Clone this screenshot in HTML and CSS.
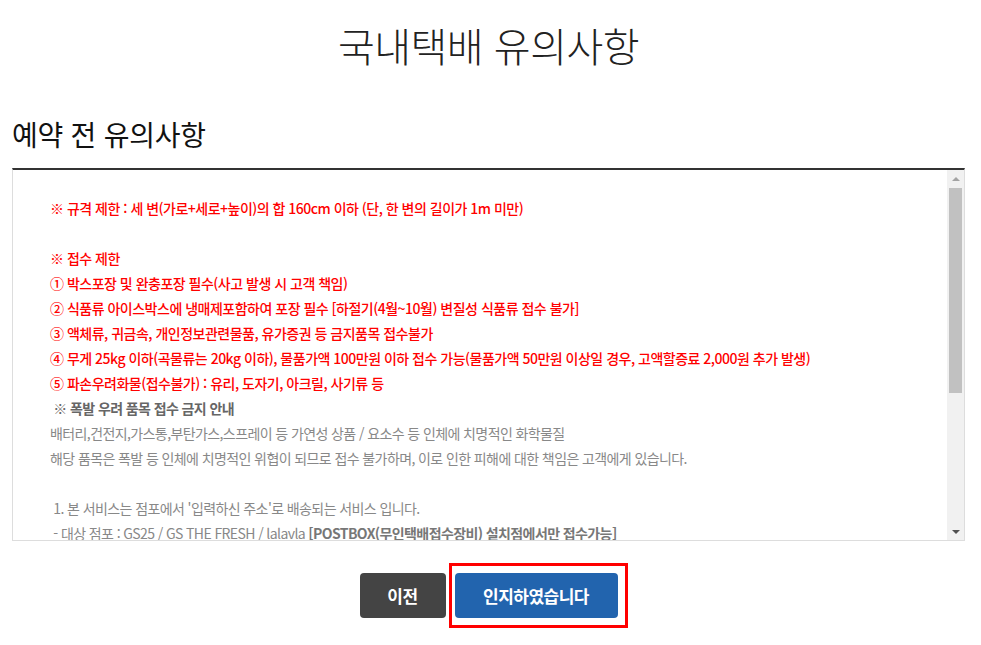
FILE: index.html
```html
<!DOCTYPE html>
<html lang="ko">
<head>
    <meta charset="UTF-8">
    <meta name="viewport" content="width=device-width, initial-scale=1.0">
    <title>국내택배 유의사항</title>
    <link rel="stylesheet" href="styles.css">
</head>
<body>
    <div class="wrap">
        <h1 class="page-title">국내택배 유의사항</h1>

        <h2 class="sub-title">예약 전 유의사항</h2>

        <div class="notice-box">
            <div class="notice-body">
                <p class="red">※ 규격 제한 : 세 변(가로+세로+높이)의 합 160cm 이하 (단, 한 변의 길이가 1m 미만)</p>
                <p class="blank"></p>
                <p class="red">※ 접수 제한</p>
                <p class="red">① 박스포장 및 완충포장 필수(사고 발생 시 고객 책임)</p>
                <p class="red">② 식품류 아이스박스에 냉매제포함하여 포장 필수 [하절기(4월~10월) 변질성 식품류 접수 불가]</p>
                <p class="red">③ 액체류, 귀금속, 개인정보관련물품, 유가증권 등 금지품목 접수불가</p>
                <p class="red">④ 무게 25kg 이하(곡물류는 20kg 이하), 물품가액 100만원 이하 접수 가능(물품가액 50만원 이상일 경우, 고액할증료 2,000원 추가 발생)</p>
                <p class="red">⑤ 파손우려화물(접수불가) : 유리, 도자기, 아크릴, 사기류 등</p>
                <p class="gray-bold">&nbsp;※ 폭발 우려 품목 접수 금지 안내</p>
                <p>배터리,건전지,가스통,부탄가스,스프레이 등 가연성 상품 / 요소수 등 인체에 치명적인 화학물질</p>
                <p>해당 품목은 폭발 등 인체에 치명적인 위협이 되므로 접수 불가하며, 이로 인한 피해에 대한 책임은 고객에게 있습니다.</p>
                <p class="blank"></p>
                <p>&nbsp;1. 본 서비스는 점포에서 '입력하신 주소'로 배송되는 서비스 입니다.</p>
                <p>&nbsp;- 대상 점포 : GS25 / GS THE FRESH / lalavla <b>[POSTBOX(무인택배접수장비) 설치점에서만 접수가능]</b></p>
            </div>
            <div class="scrollbar">
                <span class="sb-btn"><i class="arrow-up"></i></span>
                <span class="sb-track"><span class="sb-thumb"></span></span>
                <span class="sb-btn"><i class="arrow-down"></i></span>
            </div>
        </div>

        <div class="btn-area">
            <button type="button" class="btn btn-prev">이전</button>
            <button type="button" class="btn btn-ok">인지하였습니다</button>
        </div>
    </div>
</body>
</html>
```

FILE: styles.css
```css
* {
    margin: 0;
    padding: 0;
    box-sizing: border-box;
}

body {
    font-family: "Noto Sans CJK KR", "Noto Sans", sans-serif;
    background: #fff;
    color: #333;
    min-height: 100vh;
}

.wrap {
    padding: 0 16px 0 12px;
}

.page-title {
    text-align: center;
    font-size: 40px;
    font-weight: 300;
    color: #222;
    line-height: 50px;
    padding-top: 20px;
    letter-spacing: -0.5px;
}

.sub-title {
    font-size: 28px;
    font-weight: 400;
    color: #111;
    line-height: 36px;
    margin-top: 46px;
    letter-spacing: -0.25px;
}

/* 유의사항 박스 */
.notice-box {
    display: flex;
    margin-top: 16px;
    height: 373px;
    border-top: 2px solid #333;
    border-left: 1px solid #ddd;
    border-right: 1px solid #ddd;
    border-bottom: 1px solid #ddd;
}

.notice-body {
    flex: 1;
    overflow: hidden;
    padding: 26px 20px 0 37px;
    font-size: 14px;
    line-height: 25px;
    color: #888;
    letter-spacing: -0.6px;
}

.notice-body p {
    white-space: nowrap;
}

.notice-body .blank {
    height: 25px;
}

.notice-body .red {
    color: #f00;
    font-weight: 500;
    letter-spacing: -0.5px;
}

.notice-body .gray-bold {
    color: #666;
    font-weight: 700;
}

.notice-body b {
    color: #777;
}

/* 스크롤바 */
.scrollbar {
    width: 17px;
    display: flex;
    flex-direction: column;
    background: #f1f1f1;
}

.sb-btn {
    height: 17px;
    display: flex;
    justify-content: center;
    align-items: center;
}

.sb-track {
    flex: 1;
    padding: 1px 2px 0;
}

.sb-thumb {
    display: block;
    height: 205px;
    background: #c1c1c1;
}

.arrow-up {
    border-left: 4px solid transparent;
    border-right: 4px solid transparent;
    border-bottom: 4px solid #a3a3a3;
}

.arrow-down {
    border-left: 4px solid transparent;
    border-right: 4px solid transparent;
    border-top: 4px solid #505050;
}

/* 버튼 */
.btn-area {
    display: flex;
    justify-content: center;
    gap: 9px;
    margin-top: 32px;
}

.btn {
    height: 45px;
    border: none;
    border-radius: 4px;
    color: #fff;
    font-family: inherit;
    font-size: 17px;
    font-weight: 700;
    letter-spacing: -0.5px;
    cursor: pointer;
}

.btn-prev {
    width: 86px;
    background: #444;
}

.btn-ok {
    position: relative;
    width: 163px;
    background: #2264ae;
}

.btn-ok::after {
    content: "";
    position: absolute;
    top: -10px;
    left: -6px;
    right: -10px;
    bottom: -10px;
    border: 3px solid #f00;
}
```
